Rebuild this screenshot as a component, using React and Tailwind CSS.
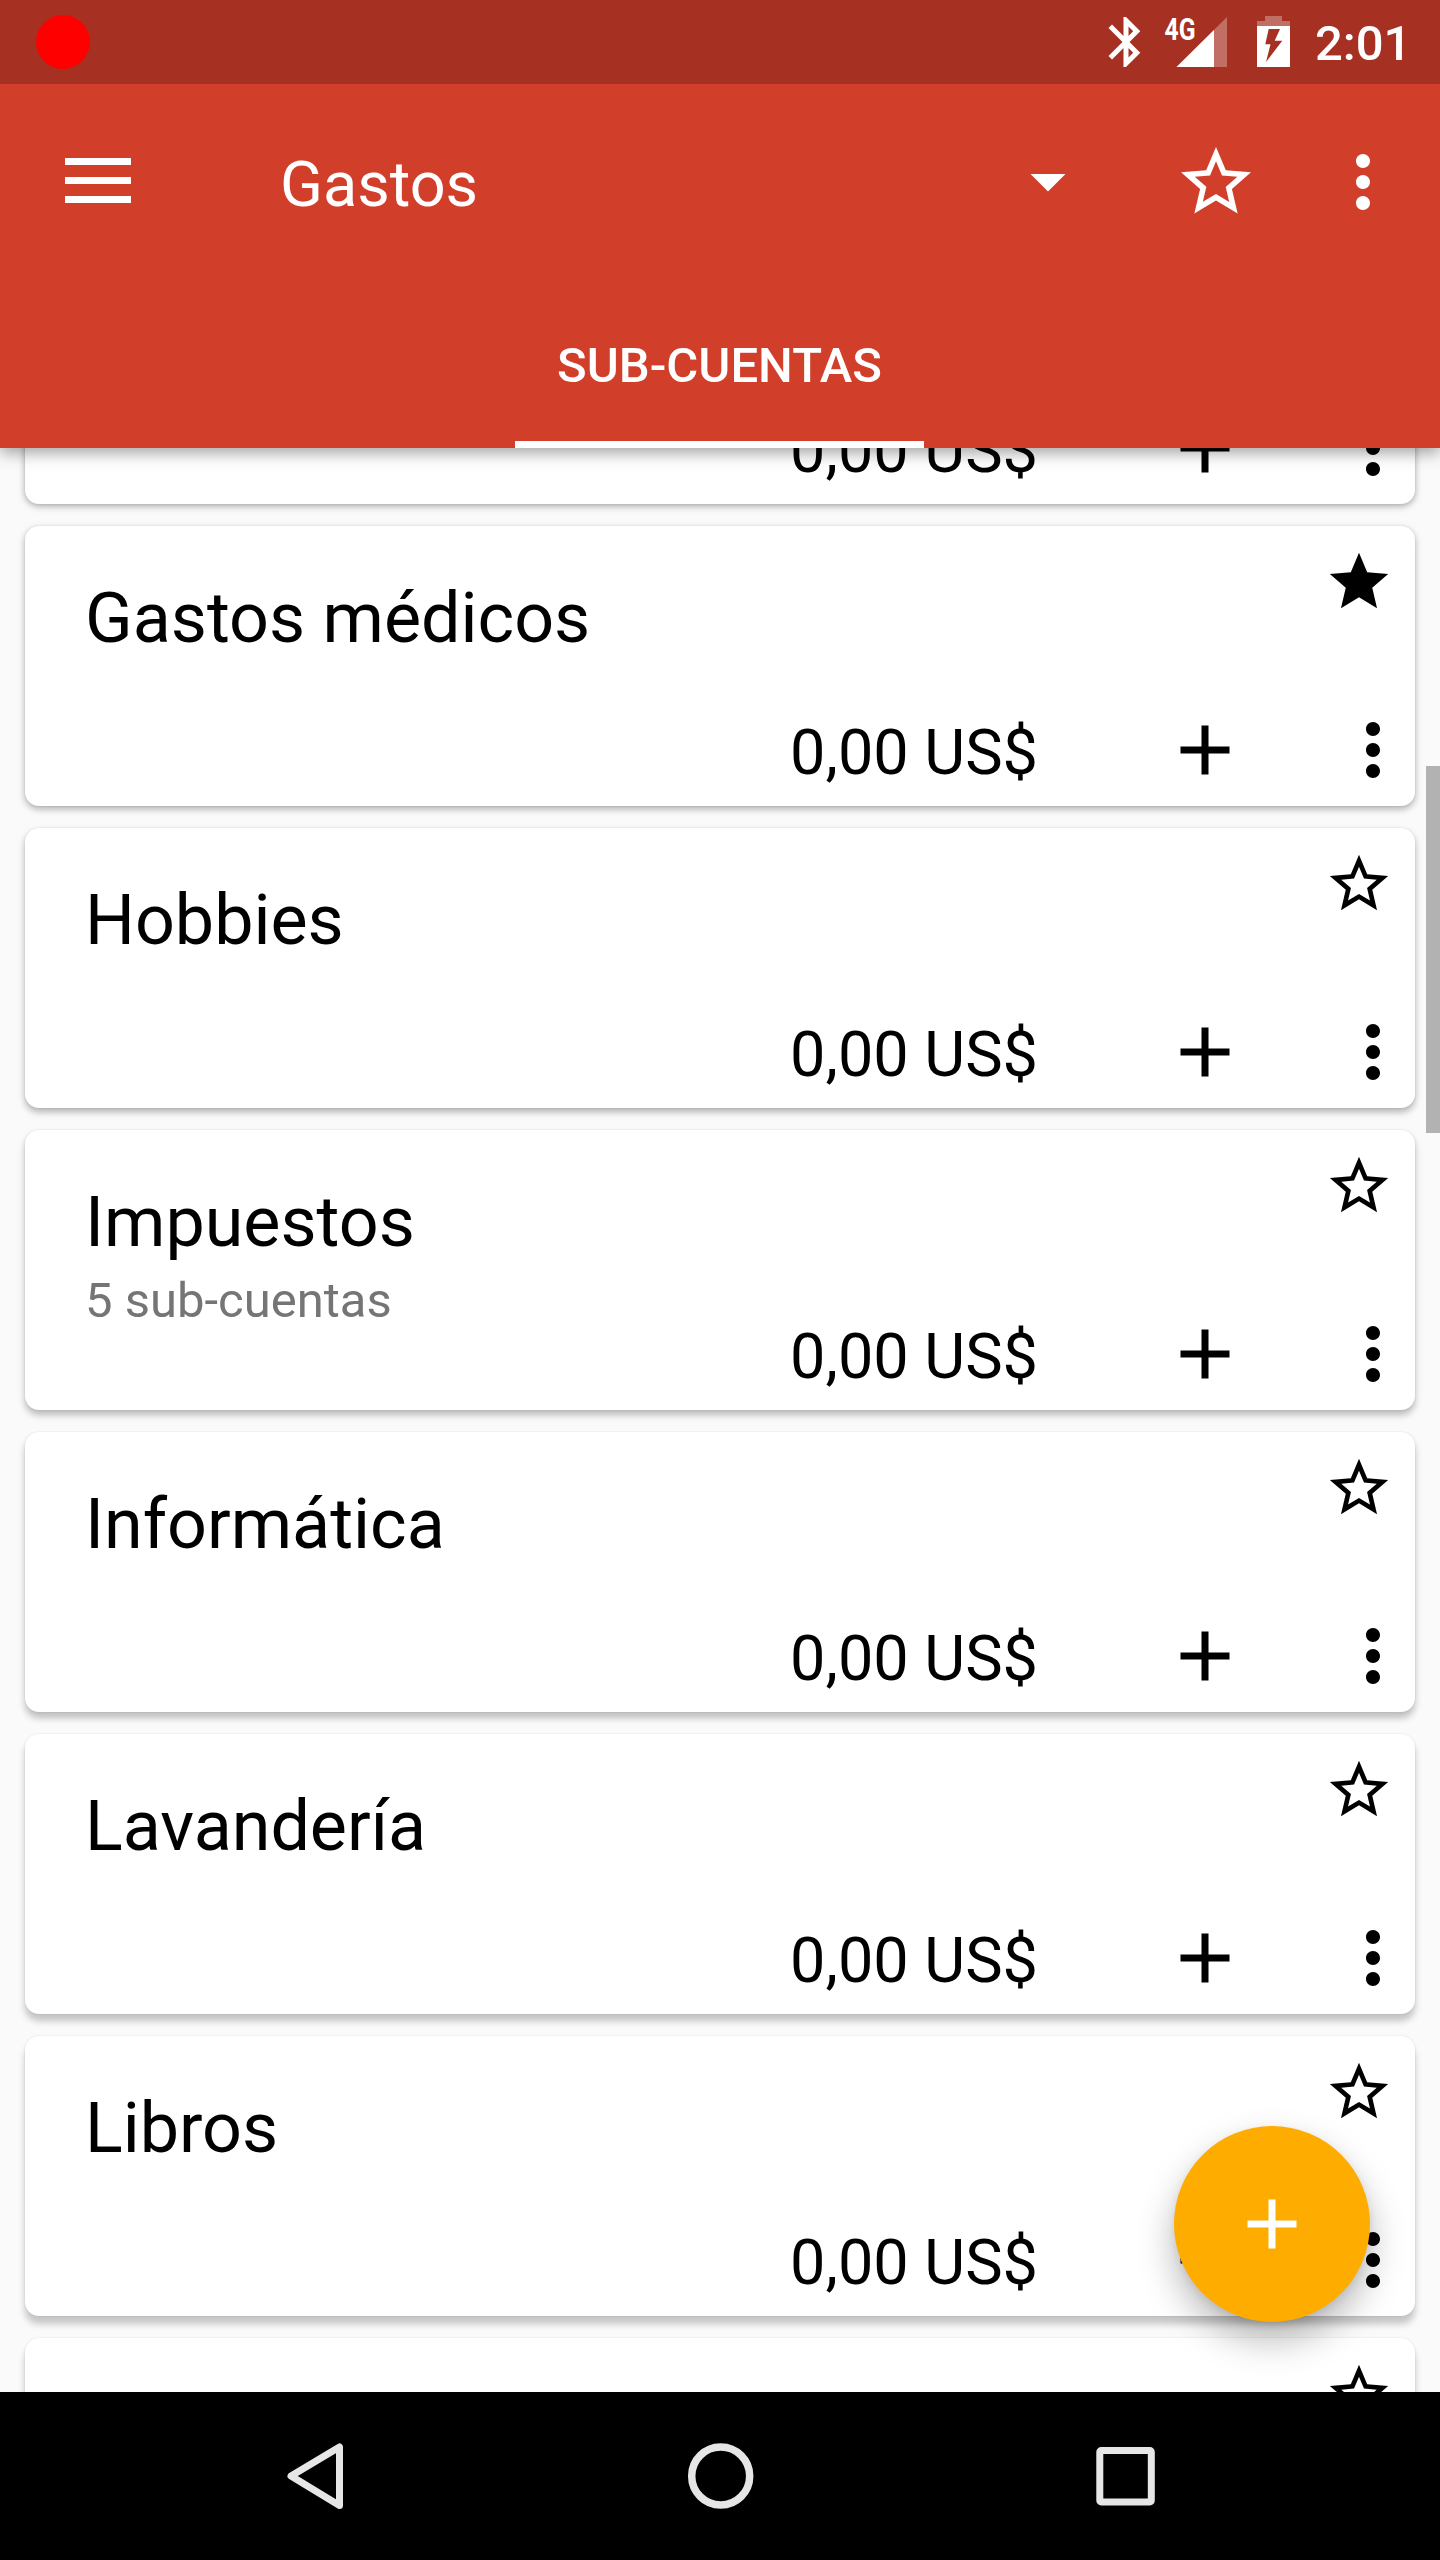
const STAR =
  "M12 17.27 18.18 21l-1.64-7.03L22 9.24l-7.19-.61L12 2 9.19 8.63 2 9.24l5.46 4.73L5.82 21z";
const STAR_OUTLINE =
  "M22 9.24l-7.19-.62L12 2 9.19 8.63 2 9.24l5.46 4.73L5.82 21 12 17.27 18.18 21l-1.63-7.03L22 9.24zM12 15.4l-3.76 2.27 1-4.28-3.32-2.88 4.38-.38L12 6.1l1.71 4.04 4.38.38-3.32 2.88 1 4.28L12 15.4z";
const MORE =
  "M12 8c1.1 0 2-.9 2-2s-.9-2-2-2-2 .9-2 2 .9 2 2 2zm0 2c-1.1 0-2 .9-2 2s.9 2 2 2 2-.9 2-2-.9-2-2-2zm0 6c-1.1 0-2 .9-2 2s.9 2 2 2 2-.9 2-2-.9-2-2-2z";
const PLUS = "M19 13h-6v6h-2v-6H5v-2h6V5h2v6h6v2z";
const BLUETOOTH =
  "M17.71 7.71 12 2h-1v7.59L6.41 5 5 6.41 10.59 12 5 17.59 6.41 19 11 14.41V22h1l5.71-5.71-4.3-4.29 4.3-4.29zM13 5.83l1.88 1.88L13 9.59V5.83zm1.88 10.46L13 18.17v-3.76l1.88 1.88z";

const AMOUNT = "0,00 US$";

const ACCOUNTS = [
  { name: "", amount: AMOUNT, shadow: "shadow-[0_2px_7px_rgba(0,0,0,0.34),0_0_2px_rgba(0,0,0,0.08)]" },
  { name: "Gastos médicos", amount: AMOUNT, starred: true, shadow: "shadow-[0_3px_7px_rgba(0,0,0,0.31),0_0_2px_rgba(0,0,0,0.1)]" },
  { name: "Hobbies", amount: AMOUNT, shadow: "shadow-[0_4px_7px_rgba(0,0,0,0.29),0_0_2px_rgba(0,0,0,0.1)]" },
  { name: "Impuestos", amount: AMOUNT, sub: "5 sub-cuentas", shadow: "shadow-[0_5px_7px_rgba(0,0,0,0.26),0_0_2px_rgba(0,0,0,0.12)]" },
  { name: "Informática", amount: AMOUNT, shadow: "shadow-[0_6px_7px_rgba(0,0,0,0.24),0_0_2px_rgba(0,0,0,0.12)]" },
  { name: "Lavandería", amount: AMOUNT, shadow: "shadow-[0_7px_7px_rgba(0,0,0,0.22),0_0_2px_rgba(0,0,0,0.12)]" },
  { name: "Libros", amount: AMOUNT, shadow: "shadow-[0_8px_7px_rgba(0,0,0,0.21),0_0_2px_rgba(0,0,0,0.12)]" },
  { name: "", shadow: "shadow-[0_8px_7px_rgba(0,0,0,0.21),0_0_2px_rgba(0,0,0,0.12)]" },
];

function Icon({ d, className }) {
  return (
    <svg viewBox="0 0 24 24" fill="currentColor" className={`shrink-0 ${className}`}>
      <path d={d} />
    </svg>
  );
}

function StatusBar() {
  return (
    <div className="flex h-[84px] items-center justify-between bg-[#a63122] px-9 text-white">
      <div className="size-[54px] rounded-full bg-[#ff0000]" />
      <div className="flex h-full items-center">
        <Icon d={BLUETOOTH} className="mr-2 size-[60px]" />
        <svg viewBox="0 0 64 84" className="h-[84px] w-16 shrink-0" fill="#fff">
          <text
            x="0.5"
            y="40"
            textLength="31"
            lengthAdjust="spacingAndGlyphs"
            className="text-[31px] font-bold"
          >
            4G
          </text>
          <path d="M63 17v50H12.500z" fillOpacity="0.3" />
          <path d="M50 30v37H12.500z" />
        </svg>
        <svg viewBox="0 0 33 84" className="ml-[29px] h-[84px] w-[33px] shrink-0" fill="#fff">
          <path d="M8 16h17v5h8v5H0v-5h8z" fillOpacity="0.3" />
          <path
            fillRule="evenodd"
            d="M0 26h33v41H0zM11.700 29 8.300 44.300h5.200L9 62l16.300-21.300h-7.600L23 29z"
          />
        </svg>
        <span className="ml-[25px] w-[89px] pt-[3px] text-[49px] leading-none font-medium whitespace-nowrap">
          2:01
        </span>
      </div>
    </div>
  );
}

function AppHeader() {
  return (
    <header className="relative z-10 bg-[#d13e2a] text-white shadow-[0_4px_16px_rgba(0,0,0,0.4)]">
      <StatusBar />
      <div className="flex h-[196px] items-center pl-[65px] pr-[35px]">
        <div className="mb-[3px] flex w-[66px] flex-col gap-[11.5px]">
          <span className="h-[7.5px] bg-white" />
          <span className="h-[7.5px] bg-white" />
          <span className="h-[7.5px] bg-white" />
        </div>
        <h1 className="ml-[149px] flex-1 pt-[5px] text-[63px] leading-[74px]">Gastos</h1>
        <Icon d="M7 10l5 5 5-5z" className="mr-[84px] mb-[2px] size-[84px]" />
        <Icon d={STAR_OUTLINE} className="mr-[63px] size-[84px]" />
        <Icon d={MORE} className="size-[84px]" />
      </div>
      <div className="flex h-[168px] justify-center pr-px">
        <div className="flex w-[409px] items-center justify-center border-b-[7px] border-white pt-[11px] text-[49px] font-medium whitespace-nowrap">
          SUB-CUENTAS
        </div>
      </div>
    </header>
  );
}

function AccountCard({ account }) {
  return (
    <article
      className={`flex h-[280px] shrink-0 justify-between rounded-[14px] bg-white pl-[60px] text-black ${account.shadow}`}
    >
      <div className="pt-[51px]">
        <h2 className="text-[70px] leading-[82px]">{account.name}</h2>
        {account.sub && (
          <p className="mt-[9px] text-[49px] leading-[58px] text-[#757575]">{account.sub}</p>
        )}
      </div>
      <div className="flex flex-col items-end justify-between pt-[21px] pb-[14px]">
        <Icon d={account.starred ? STAR : STAR_OUTLINE} className="mr-[21px] size-[70px]" />
        {account.amount && (
          <div className="flex items-center">
            <span className="mt-[6px] text-[63px] leading-[74px] whitespace-nowrap">
              {account.amount}
            </span>
            <Icon d={PLUS} className="ml-[125px] size-[84px]" />
            <Icon d={MORE} className="ml-[84px] size-[84px]" />
          </div>
        )}
      </div>
    </article>
  );
}

function NavBar() {
  return (
    <nav className="relative z-10 flex h-[168px] items-center justify-center gap-[334px] bg-black pl-[2px]">
      <svg viewBox="0 0 70 70" className="size-[70px]" fill="none" stroke="#e6e6e6" strokeWidth="7">
        <path d="M57.500 6v58.500L9 35z" strokeLinejoin="round" />
      </svg>
      <svg viewBox="0 0 70 70" className="size-[70px]" fill="none" stroke="#e6e6e6" strokeWidth="7.500">
        <circle cx="34.700" cy="35" r="29" />
      </svg>
      <svg viewBox="0 0 70 70" className="size-[70px]" fill="none" stroke="#e6e6e6" strokeWidth="7">
        <rect x="9.800" y="9.500" width="51.500" height="51.500" rx="1.500" />
      </svg>
    </nav>
  );
}

export default function App() {
  return (
    <div className="relative flex h-[2560px] w-[1440px] flex-col overflow-hidden bg-[#fafafa] font-[Roboto,sans-serif]">
      <AppHeader />
      <main className="flex min-h-0 flex-1 flex-col overflow-hidden">
        <div className="-mt-[224px] flex flex-col gap-[22px] px-[25px]">
          {ACCOUNTS.map((account, i) => (
            <AccountCard key={i} account={account} />
          ))}
        </div>
      </main>
      <div className="absolute top-[766px] right-0 h-[367px] w-[14px] bg-[#b2b2b2]" />
      <button
        aria-label="+"
        className="absolute right-[70px] bottom-[238px] flex size-[196px] items-center justify-center rounded-full bg-[#ffac00] text-white shadow-[0_18px_36px_rgba(0,0,0,0.28),0_3px_8px_rgba(0,0,0,0.08)]"
      >
        <Icon d={PLUS} className="size-[84px]" />
      </button>
      <NavBar />
    </div>
  );
}
